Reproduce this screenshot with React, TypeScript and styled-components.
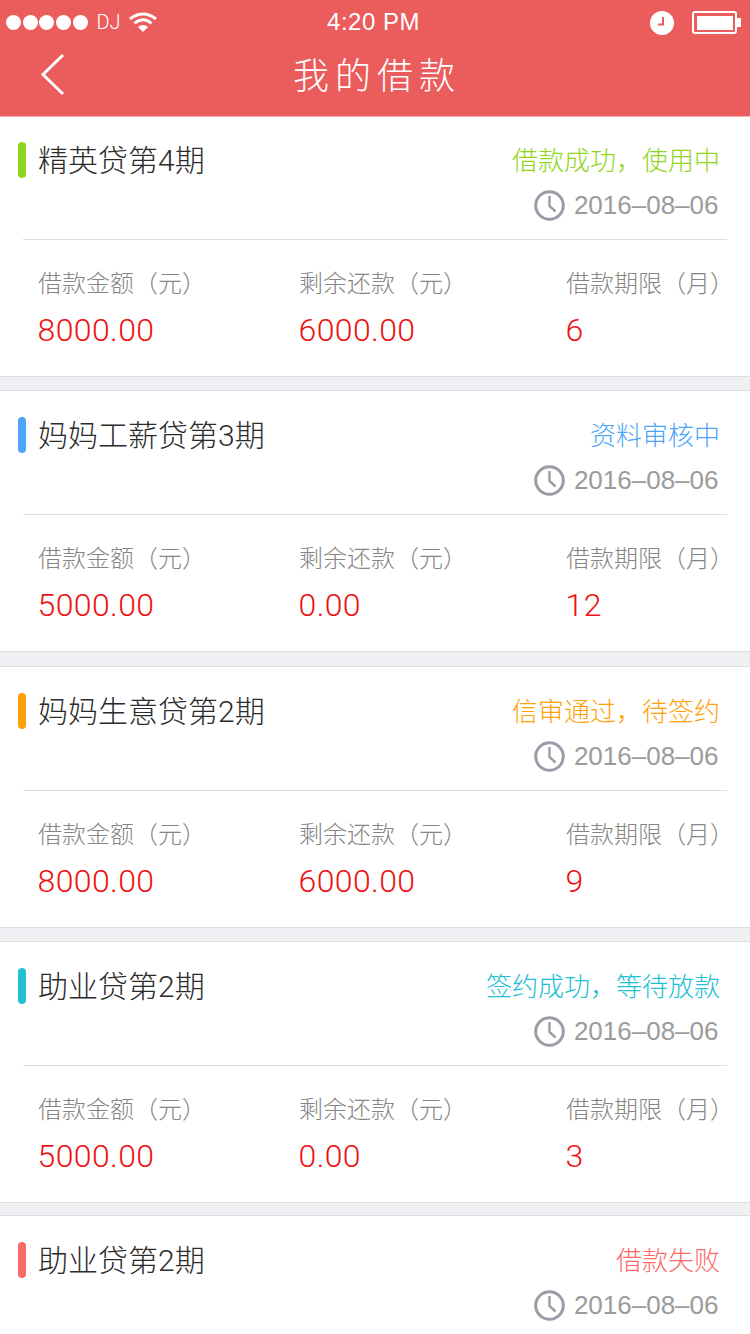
import { createGlobalStyle, styled } from "styled-components";

const GlobalStyle = createGlobalStyle`
  html, body {
    margin: 0;
    padding: 0;
    background: #efeff4;
  }
  * {
    box-sizing: border-box;
  }
`;

const Page = styled.div`
  width: 750px;
  height: 1334px;
  overflow: hidden;
  font-family: "Liberation Sans", "Noto Sans CJK SC", sans-serif;
  background: #efeff4;
`;

const Header = styled.header`
  height: 117px;
  background: #eb5c5c;
  border-bottom: 1px solid #f7b3b3;
  color: #fff;
`;

const StatusBar = styled.div`
  height: 44px;
  padding: 0 9px 0 6px;
  display: grid;
  grid-template-columns: 1fr auto 1fr;
  align-items: center;
`;

const Carrier = styled.div`
  display: flex;
  align-items: center;
`;

const Dot = styled.span`
  width: 15px;
  height: 15px;
  margin-right: 1.7px;
  border-radius: 50%;
  background: #fff;
`;

const CarrierName = styled.span`
  margin: 0 8px 0 7px;
  font-family: Roboto, sans-serif;
  font-size: 20px;
  font-weight: 300;
`;

const Time = styled.div`
  font-size: 24px;
  letter-spacing: 0.5px;
`;

const Indicators = styled.div`
  display: flex;
  justify-content: flex-end;
  align-items: center;
  gap: 18px;
  margin-top: 2px;
`;

const Nav = styled.div`
  height: 72px;
  display: grid;
  grid-template-columns: 1fr auto 1fr;
  align-items: center;
  padding-left: 40px;
`;

const BackIcon = styled.svg`
  display: block;
  margin-top: -11px;
`;

const NavTitle = styled.h1`
  margin: -14px 36px 0 0;
  font-family: "Noto Sans CJK SC", sans-serif;
  font-size: 36px;
  font-weight: 300;
  letter-spacing: 6px;
`;

const Card = styled.section<{ $gap: number }>`
  height: 262px;
  padding-top: 1px;
  margin-bottom: ${({ $gap }) => $gap}px;
  background: #fff;
  border-top: 1px solid #ddd;
  border-bottom: 1px solid #ddd;

  &:first-of-type {
    height: 260px;
    padding-top: 0;
    border-top: 0;
  }
`;

const CardHead = styled.div`
  height: 122px;
  padding: 25px 31px 0 18px;
  display: flex;
  justify-content: space-between;
`;

const TitleGroup = styled.div`
  display: flex;
  align-items: flex-start;
  gap: 12px;
`;

const Bar = styled.span<{ $color: string }>`
  width: 8px;
  height: 36px;
  border-radius: 4px;
  background: ${({ $color }) => $color};
`;

const Title = styled.h2`
  margin: 1px 0 0;
  font-family: Roboto, "Noto Sans CJK SC", sans-serif;
  font-size: 30px;
  font-weight: 300;
  line-height: 36px;
  color: #2b2b2b;
`;

const Meta = styled.div`
  display: flex;
  flex-direction: column;
  align-items: flex-end;
  gap: 10px;
`;

const Status = styled.div<{ $color: string }>`
  margin: -1px -1px 0 0;
  font-family: "Noto Sans CJK SC", sans-serif;
  font-size: 26px;
  font-weight: 300;
  line-height: 36px;
  color: ${({ $color }) => $color};
`;

const DateRow = styled.div`
  display: flex;
  align-items: center;
  gap: 8.5px;
  height: 36px;
  margin-right: 0.5px;
  font-size: 26px;
  color: #9b9b9b;
`;

const Divider = styled.div`
  height: 1px;
  margin: 0 23px;
  background: #ddd;
`;

const Stats = styled.div`
  padding: 24px 0 0 38px;
  display: grid;
  grid-template-columns: 261px 267px 1fr;
`;

const Stat = styled.div`
  display: flex;
  flex-direction: column;
  gap: 12px;
`;

const StatLabel = styled.div`
  font-family: "Noto Sans CJK SC", sans-serif;
  font-size: 24px;
  font-weight: 300;
  line-height: 36px;
  white-space: nowrap;
  color: #858585;
`;

const StatValue = styled.div`
  margin-left: -0.5px;
  font-family: Roboto, sans-serif;
  font-size: 32px;
  font-weight: 300;
  line-height: 36px;
  letter-spacing: 0.4px;
  color: #ee1111;
`;

function Wifi() {
  return (
    <svg width="28" height="20" viewBox="0 0 28 20" fill="none" stroke="#fff" strokeWidth="3">
      <path d="M1 7 Q14 -3 27 7" />
      <path d="M5.5 11.5 Q14 4 22.5 11.5" />
      <path d="M14 20 L9 15 Q14 11 19 15 Z" fill="#fff" stroke="none" />
    </svg>
  );
}

function Alarm() {
  return (
    <svg width="24" height="24" viewBox="0 0 24 24">
      <circle cx="12" cy="12" r="12" fill="#fff" />
      <path d="M13 6 V13.5 H8" fill="none" stroke="#eb5c5c" strokeWidth="2" />
    </svg>
  );
}

function Battery() {
  return (
    <svg width="49" height="24" viewBox="0 0 49 24">
      <rect x="1" y="1" width="43" height="21" rx="2" fill="none" stroke="#fff" strokeWidth="2" />
      <rect x="5" y="5" width="36" height="14" fill="#fff" />
      <path d="M45 7 H49 V16 H45 Z" fill="#fff" />
    </svg>
  );
}

function Clock() {
  return (
    <svg width="31" height="31" viewBox="0 0 31 31" fill="none" stroke="#9a9ca8">
      <circle cx="15.5" cy="15.5" r="13.8" strokeWidth="3" />
      <path d="M15.5 6 V16 L21.5 21.5" strokeWidth="2.4" />
    </svg>
  );
}

const loans = [
  { title: "精英贷第4期", status: "借款成功\uFF0C使用中", color: "#8fd61c", gap: 13, stats: ["8000.00", "6000.00", "6"] },
  { title: "妈妈工薪贷第3期", status: "资料审核中", color: "#4ea4f8", gap: 14, stats: ["5000.00", "0.00", "12"] },
  { title: "妈妈生意贷第2期", status: "信审通过\uFF0C待签约", color: "#ff9f0a", gap: 13, stats: ["8000.00", "6000.00", "9"] },
  { title: "助业贷第2期", status: "签约成功\uFF0C等待放款", color: "#22c0d4", gap: 12, stats: ["5000.00", "0.00", "3"] },
  // the last card runs off the bottom of the screen before its figures
  { title: "助业贷第2期", status: "借款失败", color: "#fb6a6a", gap: 0, stats: null },
];

const statLabels = ["借款金额\uFF08元\uFF09", "剩余还款\uFF08元\uFF09", "借款期限\uFF08月\uFF09"];

export default function App() {
  return (
    <Page lang="zh-CN">
      <GlobalStyle />
      <Header>
        <StatusBar>
          <Carrier>
            <Dot />
            <Dot />
            <Dot />
            <Dot />
            <Dot />
            <CarrierName>DJ</CarrierName>
            <Wifi />
          </Carrier>
          <Time>4:20 PM</Time>
          <Indicators>
            <Alarm />
            <Battery />
          </Indicators>
        </StatusBar>
        <Nav>
          <BackIcon width="26" height="44" viewBox="0 0 26 44" fill="none" stroke="#fff" strokeWidth="3">
            <path d="M23 2 L3 21.5 L23 41" />
          </BackIcon>
          <NavTitle>我的借款</NavTitle>
        </Nav>
      </Header>
      {loans.map((loan, i) => (
        <Card key={i} $gap={loan.gap}>
          <CardHead>
            <TitleGroup>
              <Bar $color={loan.color} />
              <Title>{loan.title}</Title>
            </TitleGroup>
            <Meta>
              <Status $color={loan.color}>{loan.status}</Status>
              <DateRow>
                <Clock />
                2016–08–06
              </DateRow>
            </Meta>
          </CardHead>
          <Divider />
          {loan.stats && (
            <Stats>
              {loan.stats.map((value, j) => (
                <Stat key={j}>
                  <StatLabel>{statLabels[j]}</StatLabel>
                  <StatValue>{value}</StatValue>
                </Stat>
              ))}
            </Stats>
          )}
        </Card>
      ))}
    </Page>
  );
}
